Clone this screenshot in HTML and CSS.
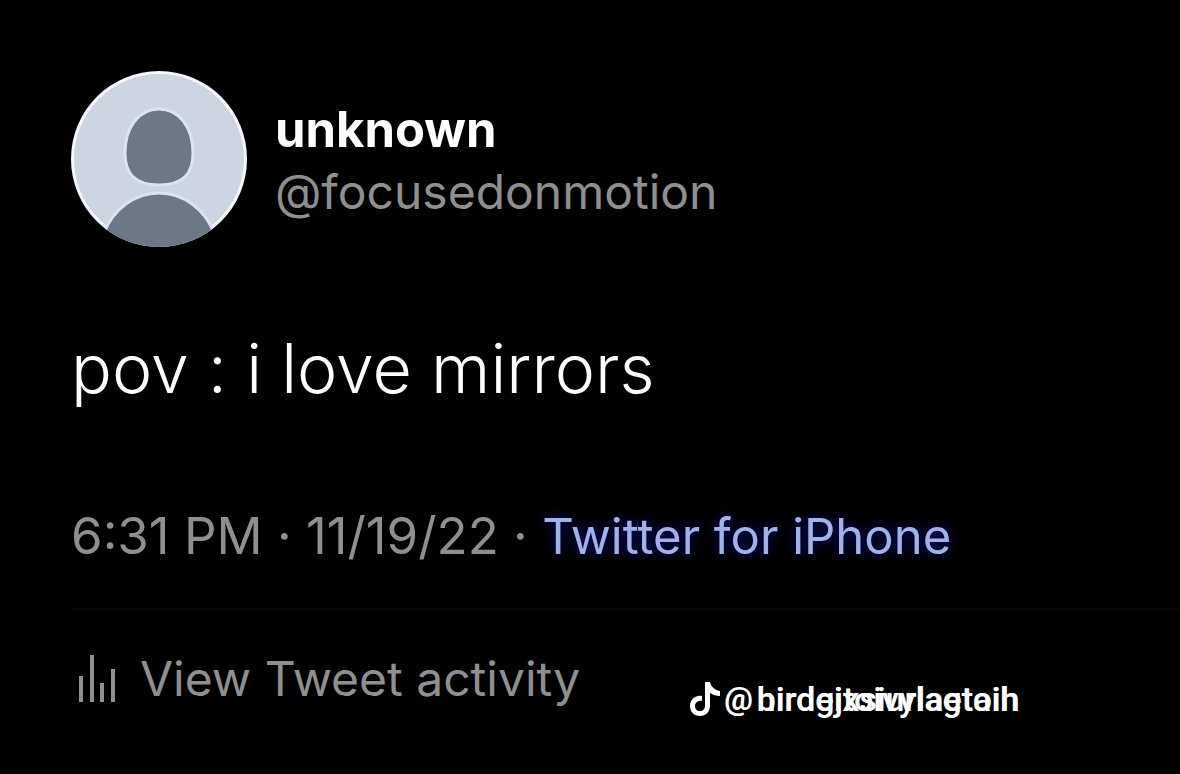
FILE: index.html
```html
<!DOCTYPE html>
<html lang="en">
<head>
    <meta charset="UTF-8">
    <title>unknown on Twitter</title>
    <link rel="stylesheet" href="styles.css">
</head>
<body>
    <article class="tweet">
        <header class="author">
            <svg class="avatar" viewBox="0 0 176 176" aria-hidden="true">
                <defs>
                    <clipPath id="circle"><circle cx="88" cy="88" r="88"/></clipPath>
                </defs>
                <g clip-path="url(#circle)">
                    <circle cx="88" cy="88" r="87" fill="#ced5e2" stroke="#f6f8fc" stroke-width="4"/>
                    <g fill="#6c7885" stroke="#dbe4f2" stroke-width="3">
                        <path d="M88 38C108 38 122 56 122 82C122 103 112 114 88 114C64 114 54 103 54 82C54 56 68 38 88 38Z"/>
                        <path d="M33 162C42 138 64 122 88 122C112 122 134 138 143 162L143 180L33 180Z"/>
                    </g>
                </g>
            </svg>
            <div class="names">
                <div class="name">unknown</div>
                <div class="handle">@focusedonmotion</div>
            </div>
        </header>

        <p class="text">pov : i love mirrors</p>

        <p class="meta">6:31 PM · 11/19/22 · <a href="#" class="source">Twitter for iPhone</a></p>

        <footer class="footer">
            <a href="#" class="activity">
                <svg class="bars" viewBox="0 0 40 50" aria-hidden="true">
                    <path d="M3 22V48M14 1V48M24 29V48M35 15V48" fill="none" stroke="#8f8f8f" stroke-width="4"/>
                </svg>
                View Tweet activity
            </a>
            <div class="watermark">
                <svg class="note" viewBox="0 0 30 36" aria-hidden="true">
                    <path d="M15 1H20C21 6 25 9 30 10V15C26 15 23 14 20 12V24C20 31 16 35 10 35C4 35 0 31 0 25C0 18 6 14 12 15V20C8 19 5 22 5 25C5 28 7 30 10 30C13 30 15 28 15 24Z" fill="#fff"/>
                </svg>
                <span class="at">@</span>
                <span class="tag">
                    <span>hirdgjtoivylagtaih</span>
                    <span>birdeixsiurlaetoih</span>
                </span>
            </div>
        </footer>
    </article>
</body>
</html>
```
FILE: styles.css
```css
body{
    margin: 0;
    background: #000;
    color: #fff;
    font-family: Inter, "Liberation Sans", sans-serif;
    font-size: 48px;
    line-height: 62px;
}
.tweet{
    padding: 71px 0 0 71px;
}
.author{
    display: flex;
    align-items: center;
    gap: 28px;
}
.avatar{
    width: 176px;
    height: 176px;
}
.names{
    padding-top: 4px;
}
.name{
    font-size: 49px;
    font-weight: 700;
}
.handle{
    color: #8f8f8f;
}
.text{
    margin: 79px 0 0;
    font-size: 68px;
    font-weight: 300;
    line-height: 84px;
}
.meta{
    margin: 95px 0 0;
    font-size: 51px;
    color: #8f8f8f;
}
.source{
    font-size: 49px;
    color: #a3b2e6;
    text-decoration: none;
    text-shadow: 0 0 12px #10108c;
}
.footer{
    display: flex;
    align-items: flex-start;
    gap: 110px;
    margin-top: 40px;
    padding-top: 38px;
    border-top: 2px solid #080808;
}
.activity{
    display: flex;
    align-items: center;
    gap: 22px;
    padding-left: 7px;
    color: #8f8f8f;
    text-decoration: none;
}
.bars{
    width: 40px;
    height: 50px;
}
.watermark{
    display: flex;
    align-items: center;
    gap: 4px;
    padding-top: 29px;
    font-family: Roboto, "Liberation Sans", sans-serif;
    font-size: 34px;
    font-weight: 500;
    line-height: 44px;
}
.note{
    width: 30px;
    height: 36px;
}
.at{
    font-size: 32px;
    font-weight: 700;
}
/* both handles share one cell */
.tag{
    display: grid;
}
.tag span{
    grid-area: 1 / 1;
}
```
